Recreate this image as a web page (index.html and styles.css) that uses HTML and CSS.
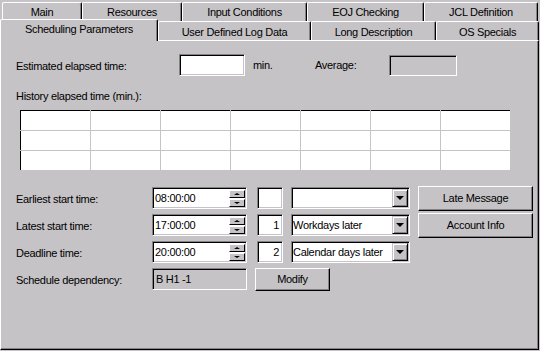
FILE: index.html
```html
<!DOCTYPE html>
<html lang="en">
  <head>
    <meta charset="UTF-8">
    <title>Scheduling Parameters</title>
    <link rel="stylesheet" href="styles.css">
  </head>
  <body>
    <div class="dialog">
      <div class="tab-row back">
        <div class="tab w-main">Main</div>
        <div class="tab w-res">Resources</div>
        <div class="tab w-input">Input Conditions</div>
        <div class="tab w-eoj">EOJ Checking</div>
        <div class="tab w-jcl">JCL Definition</div>
      </div>
      <div class="tab-row front">
        <div class="tab active w-sched">Scheduling Parameters</div>
        <div class="tab w-log">User Defined Log Data</div>
        <div class="tab w-long">Long Description</div>
        <div class="tab w-os">OS Specials</div>
      </div>

      <div class="panel">
        <div class="row estimate">
          <span class="label est-label">Estimated elapsed time:</span>
          <div class="field white est-field"></div>
          <span class="unit">min.</span>
          <span class="avg-label">Average:</span>
          <div class="field avg-field"></div>
        </div>

        <div class="history-label">History elapsed time (min.):</div>
        <table class="history">
          <tr><td></td><td></td><td></td><td></td><td></td><td></td><td></td></tr>
          <tr><td></td><td></td><td></td><td></td><td></td><td></td><td></td></tr>
          <tr><td></td><td></td><td></td><td></td><td></td><td></td><td></td></tr>
        </table>

        <div class="times">
          <div class="row">
            <span class="label">Earliest start time:</span>
            <div class="field white spin">
              <span class="value">08:00:00</span>
              <div class="spinner"><span class="sbtn up"></span><span class="sbtn down"></span></div>
            </div>
            <div class="field white num"></div>
            <div class="field white combo">
              <span class="value"></span>
              <span class="drop"></span>
            </div>
            <button class="btn wide">Late Message</button>
          </div>
          <div class="row">
            <span class="label">Latest start time:</span>
            <div class="field white spin">
              <span class="value">17:00:00</span>
              <div class="spinner"><span class="sbtn up"></span><span class="sbtn down"></span></div>
            </div>
            <div class="field white num">1</div>
            <div class="field white combo">
              <span class="value">Workdays later</span>
              <span class="drop"></span>
            </div>
            <button class="btn wide">Account Info</button>
          </div>
          <div class="row">
            <span class="label">Deadline time:</span>
            <div class="field white spin">
              <span class="value">20:00:00</span>
              <div class="spinner"><span class="sbtn up"></span><span class="sbtn down"></span></div>
            </div>
            <div class="field white num">2</div>
            <div class="field white combo">
              <span class="value">Calendar days later</span>
              <span class="drop"></span>
            </div>
          </div>
          <div class="row">
            <span class="label">Schedule dependency:</span>
            <div class="field dep"><span class="value">B H1 -1</span></div>
            <button class="btn modify">Modify</button>
          </div>
        </div>
      </div>
    </div>
  </body>
</html>
```
FILE: styles.css
```css
:root{
  --face: #c6c3c6;
  --shadow: #848284;
  --light: #ffffff;
  --dark: #000000;
}
*{
  margin: 0;
  padding: 0;
  box-sizing: border-box;
}
body{
  background-color: var(--face);
  font-family: "Liberation Sans", Arial, sans-serif;
  font-size: 11px;
  letter-spacing: -0.3px;
  color: black;
  width: 540px;
  height: 351px;
  overflow: hidden;
}
.dialog{
  padding-top: 2px;
}

/* tabs */
.tab-row{
  display: flex;
  align-items: flex-end;
}
.back{
  height: 19px;
  padding-left: 2px;
}
.front{
  height: 19px;
}
.tab{
  height: 19px;
  line-height: 18px;
  text-align: center;
  border-top: 1px solid var(--light);
  border-left: 1px solid var(--light);
  border-right: 1px solid var(--dark);
  border-radius: 2px 2px 0 0;
  box-shadow: inset -1px 0 var(--shadow);
}
.front .tab{
  line-height: 20px;
}
.tab.active{
  position: relative; /* sits over the panel border */
  z-index: 1;
  height: 22px;
  margin-bottom: -1px;
  line-height: 19px;
  background-color: var(--face);
}
.w-main{ width: 80px; }
.w-res{ width: 100px; }
.w-input{ width: 125px; }
.w-eoj{ width: 117px; }
.w-jcl{ width: 114px; }
.w-sched{ width: 158px; }
.w-log{ width: 153px; }
.w-long{ width: 125px; }
.w-os{ width: 103px; }

/* panel */
.panel{
  width: 539px;
  height: 310px;
  border-top: 1px solid var(--light);
  border-left: 1px solid var(--light);
  border-right: 1px solid var(--dark);
  border-bottom: 1px solid var(--dark);
  box-shadow: inset -1px -1px var(--shadow);
  padding: 13px 0 0 15px;
}
.row{
  display: flex;
  align-items: center;
  height: 22px;
}
.label{
  width: 136px;
  padding-top: 2px;
}
.est-label{
  width: 163px;
}
.field{
  height: 22px;
  border: 1px solid;
  border-color: var(--shadow) var(--light) var(--light) var(--shadow);
  box-shadow: inset 1px 1px var(--dark), inset -1px -1px var(--face);
  display: flex;
  align-items: center;
}
.white{
  background-color: white;
}
.est-field{
  width: 66px;
}
.unit{
  width: 70px;
  padding-left: 8px;
}
.avg-label{
  width: 74px;
}
.avg-field{
  width: 68px;
  height: 21px;
}

.history-label{
  margin-top: 14px;
  line-height: 13px;
}
.history{
  margin: 7px 0 0 4px;
  width: 491px;
  border-collapse: collapse;
  table-layout: fixed;
  background-color: white;
  border: 1px solid var(--dark);
}
.history td{
  height: 20px;
  width: 70px;
  border: 1px solid var(--face);
}
.history tr:first-child td{
  border-top-color: var(--dark);
}
.history td:first-child{
  border-left-color: var(--dark);
}

/* time rows */
.times{
  margin-top: 16px;
}
.times .row{
  margin-bottom: 5px;
}
.value{
  flex: 1;
  padding-left: 2px;
  white-space: nowrap;
  overflow: hidden;
}
.spin{
  width: 95px;
}
.spinner{
  width: 16px;
  margin-right: 1px;
  display: flex;
  flex-direction: column;
  gap: 1px;
}
.sbtn{
  height: 8px;
  background-color: var(--face);
  border: 1px solid;
  border-color: var(--light) var(--dark) var(--dark) var(--light);
  display: flex;
  justify-content: center;
  align-items: center;
}
.sbtn::after{
  content: "";
  border-left: 3px solid transparent;
  border-right: 3px solid transparent;
}
.up::after{
  border-bottom: 2px solid var(--dark);
}
.down::after{
  border-top: 2px solid var(--dark);
}
.num{
  width: 26px;
  margin-left: 10px;
  justify-content: flex-end;
  padding-right: 3px;
}
.combo{
  width: 119px;
  margin-left: 8px;
}
.combo .value{
  padding-left: 1px;
}
.drop{
  width: 16px;
  height: 18px;
  margin-right: 1px;
  background-color: var(--face);
  border: 1px solid;
  border-color: var(--face) var(--dark) var(--dark) var(--face);
  box-shadow: inset 1px 1px var(--light), inset -1px -1px var(--shadow);
  display: flex;
  justify-content: center;
  align-items: center;
}
.drop::after{
  content: "";
  border-left: 4px solid transparent;
  border-right: 4px solid transparent;
  border-top: 4px solid var(--dark);
}
.btn{
  font-family: inherit;
  font-size: 11px;
  letter-spacing: -0.3px;
  color: black;
  background-color: var(--face);
  border: 1px solid;
  border-color: var(--light) var(--dark) var(--dark) var(--light);
  box-shadow: inset -1px -1px var(--shadow);
}
.wide{
  width: 115px;
  height: 25px;
  margin-left: 8px;
}
.dep{
  width: 95px;
}
.dep .value{
  padding-left: 3px;
}
.modify{
  width: 75px;
  height: 23px;
  margin-left: 8px;
}
```
